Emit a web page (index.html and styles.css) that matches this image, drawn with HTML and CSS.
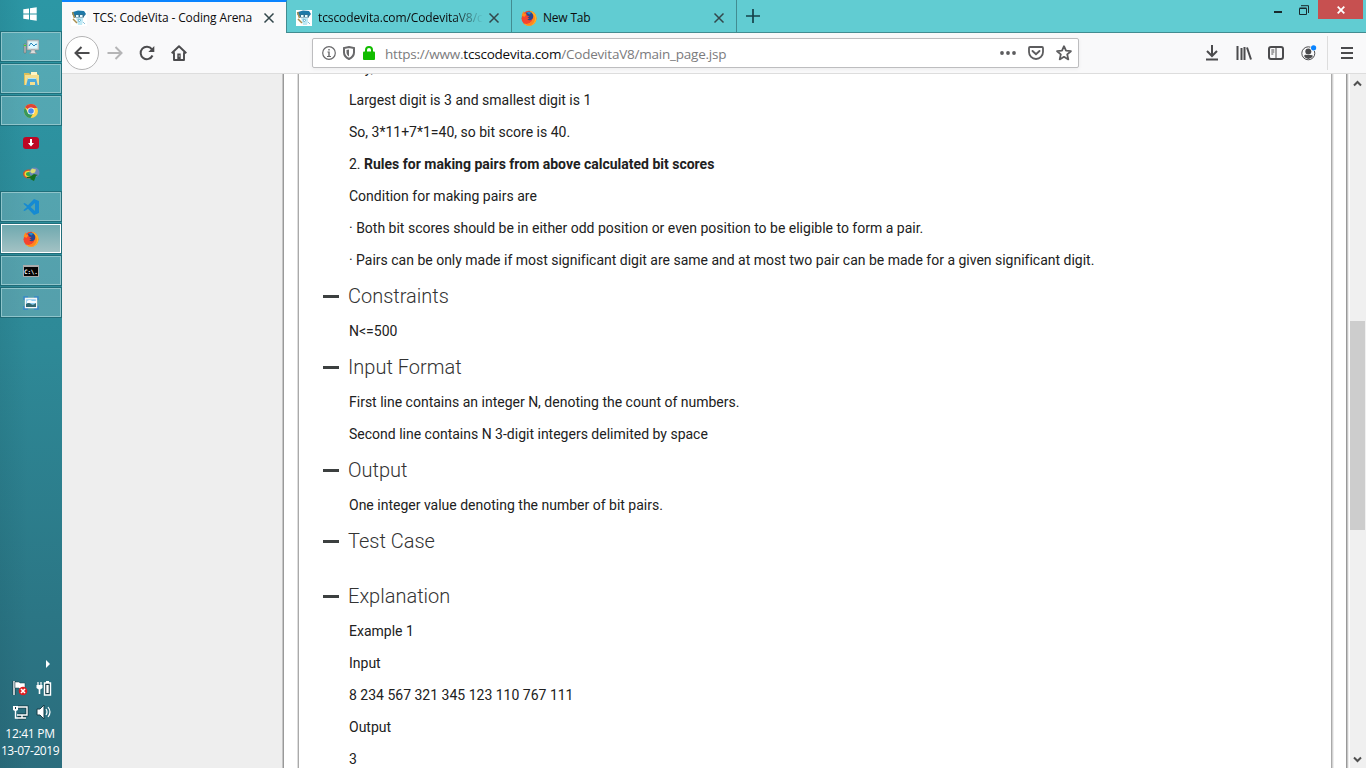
FILE: index.html
```html
<!DOCTYPE html>
<html lang="en">
<head>
<meta charset="utf-8">
<title>TCS: CodeVita - Coding Arena</title>
<link rel="stylesheet" href="styles.css">
</head>
<body>
<svg class="defs" width="0" height="0" aria-hidden="true">
  <defs>
    <symbol id="firefox" viewBox="0 0 16 16">
      <circle cx="8" cy="8.300" r="7.500" fill="#f5432f"/>
      <path d="M9 .8c4.500 1 6.600 4.300 6.500 7.600C15.300 12.800 12 15.800 8 15.800c-2 0-4-.8-5.300-2.300C8 15 12 12 12 7.500c0-2-2-4-3-6.700z" fill="#ffb321"/>
      <path d="M12 4c3 3 2.500 8-1 10.500-2 1.200-5 1-6.500 0C9 14.500 13 11 12 4z" fill="#ff8420"/>
      <path d="M.7 6C1 3.300 2.200 1.700 3 1.300l.2 2.200 2.600.2-2 3z" fill="#ff8b1c"/>
      <path d="M5 3.300C6.500 1.300 9.500 1.300 11 3c1.700 2 1.600 4.500.3 6-1.500 1.700-4 1.500-5 .5L8.500 8.500 6.500 7.500l2-1.200-2.500-.8z" fill="#2a468f"/>
      <path d="M5.500 2.800c1.200-1.500 3.500-1.500 4.800-.3L8.500 4.500z" fill="#238bd0"/>
    </symbol>
    <symbol id="coder" viewBox="0 0 16 16">
      <path fill="#fff" d="M0 0h16v16H0z"/>
      <path d="M2 2l5-1.500 6 .5 2 3-2 2.500H3L1 4z" fill="#1d78a8"/>
      <path d="M5 8h7v3l-1 4H7l-1-4z" fill="#bfe9f5"/>
      <path d="M4 4.500h9v3H4z" fill="#356f8c"/>
      <path d="M5 5h2.500v2H5zM9 5h2.500v2H9z" fill="#e9fbff"/>
      <path d="M1.500 2l2 6M2 9l4 4" stroke="#a98d4d" stroke-width="1.500"/>
      <path d="M7 9l3 1-2 2zM12 12l2 2" stroke="#6bb3cf" stroke-width=".8" fill="#fff"/>
    </symbol>
    <symbol id="close" viewBox="0 0 12 12"><path d="M1.500 1.500l9 9m0-9l-9 9" fill="none" stroke="currentColor" stroke-width="1.500"/></symbol>
  </defs>
</svg>
<div class="desktop">
  <aside class="taskbar">
    <div class="start"><svg width="14" height="14" viewBox="0 0 14 14" fill="#fff"><path d="M.3 2.200L6 1.400v5.200H.3zM7 1.200L13.700.2v6.400H7zM.3 7.500H6v5.100l-5.700-.8zM7 7.500h6.700v6.300L7 12.800z"/></svg></div>
    <div class="task open"><svg width="16" height="16" viewBox="0 0 16 16"><path d="M1 5h2v9H1z" fill="#bbb" stroke="#666" stroke-width=".5"/><path d="M1 6h2v1H1z" fill="#35dd20"/><path d="M4 1h12v10H4z" fill="#ccd0d0" stroke="#808c91" stroke-width=".6"/><path d="M5.500 2.500h9v7h-9z" fill="#dff8ff"/><path d="M6 7l2-3 3 3 2-2 1 .5" fill="none" stroke="#2384b9"/><path d="M8 11h4v2l2 1.500H6L8 13z" fill="#ddd" stroke="#888" stroke-width=".5"/></svg></div>
    <div class="task open"><svg width="17" height="16" viewBox="0 0 17 16"><path d="M1 2h5l1 1h8v11H1z" fill="#dcbf59"/><path d="M2 4h14v10H2z" fill="#f4df90"/><path d="M8 1h6v3H8z" fill="#fff5c4"/><path d="M5 7h8l2 8h-3v-4H7v4H3z" fill="#4ba9db"/><path d="M5 7.500h8" stroke="#b7e9fa"/></svg></div>
    <div class="task open"><svg width="16" height="16" viewBox="0 0 16 16"><circle cx="8" cy="8" r="7" fill="#ffd44c"/><path d="M8 8L2 4.300A7 7 0 0 1 14.200 5H8z" fill="#de4436"/><path d="M1.900 4.500A7 7 0 0 0 7.500 15l3.200-5.500L8 8 5 9.500z" fill="#37975a"/><circle cx="8" cy="8" r="3.600" fill="#fff"/><circle cx="8" cy="8" r="2.800" fill="#4989ec"/></svg></div>
    <div class="task"><svg width="16" height="12" viewBox="0 0 16 12"><rect width="16" height="12" rx="3" fill="#bd0724"/><path d="M7 2h2v4h2L8 9.500 5 6h2z" fill="#fff"/></svg></div>
    <div class="task"><svg width="17" height="15" viewBox="0 0 17 15"><ellipse cx="6" cy="7" rx="6" ry="4.500" fill="#d1532d"/><ellipse cx="6" cy="7" rx="4.500" ry="3.300" fill="#f2d738"/><ellipse cx="6" cy="7" rx="3" ry="2" fill="#2caa51"/><circle cx="11.500" cy="5.500" r="5" fill="#6c87b8"/><path d="M9 1.500l4 1-1 3-3 1-2-2z" fill="#d9dc75"/><path d="M4 10l4-1 3-2 4 1-2 1-2 5-4-2 1-1-4 0z" fill="#156f20"/></svg></div>
    <div class="task open"><svg width="16" height="16" viewBox="0 0 16 16"><path d="M11 0l5 2v12l-5 2L5 9.800 1.700 12 .3 11.200 4 8 .3 4.800 1.700 4 5 6.200zm1 4L7.500 8l4.500 4z" fill="#168ad2"/></svg></div>
    <div class="task open active"><svg width="16" height="16"><use href="#firefox"/></svg></div>
    <div class="task open"><div class="console">C:\.</div></div>
    <div class="task open"><svg width="16" height="14" viewBox="0 0 16 14"><path d="M1 4V1h4M11 1h4v3M15 10v3h-4M5 13H1v-3" fill="none" stroke="#3786c8" stroke-width="1.500"/><path d="M2.500 2.500h11v9h-11z" fill="#8fcef2" stroke="#f5f5f5" stroke-width="1.300"/><path d="M3 8q3-2 5 0t5-1v4H3z" fill="#31676f"/><path d="M4 5q3-2 5 0h4v2H4z" fill="#f4fbff"/></svg></div>
    <div class="tray">
      <div class="tray-more"><svg width="6" height="8" viewBox="0 0 6 8"><path d="M1 0l4 4-4 4z" fill="#fff"/></svg></div>
      <div class="tray-row">
        <svg width="17" height="16" viewBox="0 0 17 16"><path d="M2 1v14" stroke="#163c46" stroke-width="3"/><path d="M2 1v14" stroke="#fff" stroke-width="1.400"/><path d="M3 2h4l1 1h5v6H8L7 8H3z" fill="#fff" stroke="#163c46" stroke-width=".5"/><circle cx="11" cy="11" r="4.300" fill="#df1e20"/><path d="M9 9l4 4m0-4l-4 4" stroke="#fff" stroke-width="1.600"/></svg>
        <svg width="16" height="16" viewBox="0 0 16 16"><path d="M2 2v4M5 2v4" stroke="#fff" stroke-width="1.200"/><path d="M.5 5h6v3L4.300 9.500V14H2.700V9.500L.5 8z" fill="#fff"/><path d="M8.500 3h6v12h-6z" fill="#163c46" stroke="#fff" stroke-width="1.400"/><path d="M10 1h3v2h-3zM10.300 5h2.400v8h-2.400z" fill="#fff"/></svg>
      </div>
      <div class="tray-row">
        <svg width="17" height="16" viewBox="0 0 17 16"><path d="M6 3h9v8H6M10 11v3M6 14h8" fill="none" stroke="#163c46" stroke-width="3"/><path d="M6 3h9v8H5M10 11v3M6 14h8M3.500 6v8H6" fill="none" stroke="#fff" stroke-width="1.400"/><path d="M1 2h5v4L4 7H3L1 6z" fill="#fff"/><path d="M3 3h1v2H3z" fill="#163c46"/></svg>
        <svg width="16" height="16" viewBox="0 0 16 16"><path d="M1 5h3l4-4v14l-4-4H1z" fill="#fff" stroke="#163c46"/><path d="M10 5q2 3 0 6M12 3q4 5 0 10" fill="none" stroke="#fff" stroke-width="1.200"/></svg>
      </div>
      <div class="clock"><span class="time">12:41 PM</span><span class="date">13-07-2019</span></div>
    </div>
  </aside>
  <main class="browser">
    <header class="tabs">
      <div class="tab selected"><svg class="favicon"><use href="#coder"/></svg><span class="tab-title first">TCS: CodeVita - Coding Arena</span><svg class="x"><use href="#close"/></svg></div>
      <div class="tab"><svg class="favicon"><use href="#coder"/></svg><span class="tab-title fade">tcscodevita.com/CodevitaV8/co</span><svg class="x"><use href="#close"/></svg></div>
      <div class="tab"><svg class="favicon"><use href="#firefox"/></svg><span class="tab-title newtab">New Tab</span><svg class="x"><use href="#close"/></svg></div>
      <svg class="plus" width="14" height="14" viewBox="0 0 14 14"><path d="M7 0v14M0 7h14" stroke="#164149" stroke-width="1.700"/></svg>
      <div class="window-buttons">
        <svg width="8" height="2"><path fill="#18292c" d="M0 0h8v2H0z"/></svg>
        <svg width="10" height="10" viewBox="0 0 10 10"><path d="M.5 3.500h7v6h-7zM.5 3h7M2 .7h7.500V8" fill="none" stroke="#18292c"/></svg>
        <div class="window-close"><svg width="8" height="8" viewBox="0 0 8 8"><path d="M.7.7l6.600 6.600m0-6.600L.7 7.300" stroke="#fff" stroke-width="1.800"/></svg></div>
      </div>
    </header>
    <nav class="toolbar">
      <div class="back"><svg width="16" height="16" viewBox="0 0 16 16"><path d="M15.500 8H1.500m6-6l-6 6 6 6" fill="none" stroke="#4b4b4d" stroke-width="2"/></svg></div>
      <svg class="forward" width="16" height="16" viewBox="0 0 16 16"><path d="M.5 8h14m-6-6l6 6-6 6" fill="none" stroke="#b5b5b6" stroke-width="2"/></svg>
      <svg class="reload" width="16" height="16" viewBox="0 0 16 16"><path d="M12.800 4.200A6.200 6.200 0 1 0 13.500 10.500" fill="none" stroke="#4b4b4d" stroke-width="2"/><path d="M15.300 1v6H9.300z" fill="#4b4b4d"/></svg>
      <svg class="home" width="16" height="16" viewBox="0 0 16 16"><path d="M.7 8.300L8 1.200l7.300 7.100M3 7.300V15h10V7.300" fill="none" stroke="#4b4b4d" stroke-width="1.900" stroke-linejoin="round"/><path d="M6.300 8.500h3.400V15H6.300z" fill="#4b4b4d"/><path d="M7.700 10.500h1v1h-1z" fill="#fff"/></svg>
      <div class="address">
        <svg width="14" height="14" viewBox="0 0 14 14"><circle cx="7" cy="7" r="6.300" fill="none" stroke="#69696b" stroke-width="1.200"/><path d="M6.300 3h1.400v1.400H6.300zM5.500 5.600h2.200V10H9v1H5v-1h1.300V6.600h-.8z" fill="#69696b"/></svg>
        <svg width="12" height="14" viewBox="0 0 12 14"><path d="M6 1l5 1v4.500c0 3-2 5-5 6.500-3-1.500-5-3.500-5-6.500V2z" fill="none" stroke="#69696b" stroke-width="2"/><path d="M6 3.500v7C4.500 9.500 3.500 8 3.500 6.500V4z" fill="#69696b"/></svg>
        <svg width="12" height="14" viewBox="0 0 12 14"><path d="M3 6V4a3 3 0 0 1 6 0v2" fill="none" stroke="#12bc00" stroke-width="2"/><rect y="5.500" width="12" height="8.500" rx="1" fill="#12bc00"/></svg>
        <span class="url">https://www.<b>tcscodevita.com</b>/CodevitaV8/main_page.jsp</span>
        <svg class="dots" width="16" height="4" viewBox="0 0 16 4" fill="#5c5c5e"><circle cx="2" cy="2" r="1.900"/><circle cx="8" cy="2" r="1.900"/><circle cx="14" cy="2" r="1.900"/></svg>
        <svg class="pocket" width="16" height="14" viewBox="0 0 16 14"><path d="M2 1h12q1 0 1 1v4a7 7 0 0 1-14 0V2q0-1 1-1z" fill="none" stroke="#5c5c5e" stroke-width="1.800"/><path d="M4.500 5L8 8.300 11.500 5" fill="none" stroke="#5c5c5e" stroke-width="1.900" stroke-linecap="round"/></svg>
        <svg class="star" width="16" height="16" viewBox="0 0 16 16"><path d="M8 1.200l2 4.500 4.900.5-3.700 3.200 1.100 5L8 11.800l-4.300 2.600 1.100-5L1.100 6.200 6 5.700z" fill="none" stroke="#5c5c5e" stroke-width="1.800" stroke-linejoin="round"/></svg>
      </div>
      <div class="actions">
        <svg width="14" height="16" viewBox="0 0 14 16"><path d="M7 0v11M2 6l5 5 5-5M1 14.500h12" fill="none" stroke="#4b4b4d" stroke-width="2"/></svg>
        <svg width="16" height="14" viewBox="0 0 16 14"><path d="M1.500 0v14M5.500 2v12M8.500 1v13M11 1.500l4 12" fill="none" stroke="#4b4b4d" stroke-width="2"/></svg>
        <svg width="16" height="14" viewBox="0 0 16 14"><rect x="1" y="1" width="14" height="12" rx="2" fill="none" stroke="#4b4b4d" stroke-width="2"/><path d="M8 1v12M3.300 4h3M3.300 6h3M3.300 8h2" stroke="#4b4b4d"/></svg>
        <svg width="16" height="16" viewBox="0 0 16 16"><circle cx="7.300" cy="8.300" r="6.500" fill="none" stroke="#4b4b4d"/><circle cx="7.300" cy="6.500" r="3" fill="#4b4b4d"/><path d="M3 11q1-2 3-1h3q2-.5 3 1-2 3-4.700 3T3 11z" fill="#4b4b4d"/><circle cx="12.600" cy="2.800" r="3.300" fill="#f9f9fa"/><circle cx="12.600" cy="2.800" r="2.600" fill="#0a84ff"/></svg>
        <i class="divider"></i>
        <svg width="12" height="12" viewBox="0 0 12 12"><path d="M0 1h12M0 6h12M0 11h12" stroke="#4b4b4d" stroke-width="2"/></svg>
      </div>
    </nav>
    <section class="viewport">
      <div class="outer"><article class="problem">
        <p>Say,</p>
        <p>Largest digit is 3 and smallest digit is 1</p>
        <p>So, 3*11+7*1=40, so bit score is 40.</p>
        <p>2. <strong>Rules for making pairs from above calculated bit scores</strong></p>
        <p>Condition for making pairs are</p>
        <p>· Both bit scores should be in either odd position or even position to be eligible to form a pair.</p>
        <p class="long">· Pairs can be only made if most significant digit are same and at most two pair can be made for a given significant digit.</p>
        <h2>Constraints</h2>
        <p>N&lt;=500</p>
        <h2>Input Format</h2>
        <p>First line contains an integer N, denoting the count of numbers.</p>
        <p>Second line contains N 3-digit integers delimited by space</p>
        <h2>Output</h2>
        <p>One integer value denoting the number of bit pairs.</p>
        <h2 class="empty">Test Case</h2>
        <h2>Explanation</h2>
        <p>Example 1</p>
        <p>Input</p>
        <p>8 234 567 321 345 123 110 767 111</p>
        <p>Output</p>
        <p>3</p>
      </article></div>
      <div class="scrollbar">
        <svg width="9" height="7" viewBox="0 0 9 7"><path d="M1 5.500L4.500 2 8 5.500" fill="none" stroke="#505050" stroke-width="2"/></svg>
        <div class="thumb"></div>
        <svg class="down" width="9" height="7" viewBox="0 0 9 7"><path d="M1 1.500L4.500 5 8 1.500" fill="none" stroke="#505050" stroke-width="2"/></svg>
      </div>
    </section>
  </main>
</div>
</body>
</html>
```
FILE: styles.css
```css
* { box-sizing: border-box; }
body { margin: 0; overflow: hidden; font-family: "Open Sans", "Noto Sans", sans-serif; }
svg { display: block; flex-shrink: 0; }
.defs { position: absolute; }
.desktop { display: flex; width: 1366px; height: 768px; }

.taskbar { width: 62px; display: flex; flex-direction: column; background: linear-gradient(90deg, rgba(0,40,50,.08), transparent 45%), linear-gradient(#2c97a5, #2e8997 45%, #2b7685 80%, #2b6d7d); }
.start { height: 32px; padding: 0 2px 4px 0; display: flex; justify-content: center; align-items: center; }
.task { height: 29px; margin: 0 1px 3px 1px; display: flex; justify-content: center; align-items: center; }
.open { background: rgba(255,255,255,.19); border: 1px solid #8fc4ca; box-shadow: 0 0 0 1px rgba(20,80,90,.5); }
.active { background: linear-gradient(#6fa9af, #a3c2c4); border-color: #fff; }
.console { width: 16px; height: 12px; background: #050505; border: 1px solid #a9aaaa; border-top-width: 2px; color: #fff; font: bold 6px/9px "DejaVu Sans Mono", monospace; letter-spacing: -.2px; }
.tray { margin-top: auto; height: 112px; color: #fff; }
.tray-more { height: 16px; padding: 4px 0 0 45px; }
.tray-row { height: 24px; padding: 0 10px 0 12px; display: flex; justify-content: space-between; align-items: center; }
.tray-row:nth-child(2) { margin-top: 4px; }
.clock { display: flex; flex-direction: column; align-items: center; font-size: 12px; line-height: 17px; white-space: nowrap; padding: 1px 2px 0 0; }
.time { letter-spacing: -.3px; }
.date { letter-spacing: -.45px; }

.browser { width: 1304px; display: flex; flex-direction: column; }
.tabs { height: 33px; display: flex; background: #61ccd2; box-shadow: inset 0 -1px #428c91; }
.tab { width: 225px; height: 33px; padding: 2px 11px 0 9px; display: flex; align-items: center; border-right: 1px solid #428c91; }
.selected { background: #f9f9fa; border-top: 2px solid #0a84ff; padding-top: 0; }
.favicon { width: 16px; height: 16px; margin-right: 6px; }
.x { width: 12px; height: 12px; margin-left: auto; color: #33474b; }
.tab-title { width: 165px; overflow: hidden; white-space: nowrap; font-size: 12px; color: #0c0c0d; line-height: 20px; }
.fade { letter-spacing: -.1px; -webkit-mask-image: linear-gradient(90deg, #000 82%, transparent 100%); mask-image: linear-gradient(90deg, #000 82%, transparent 100%); }
.first { letter-spacing: -.12px; }
.newtab { letter-spacing: -.2px; }
.plus { margin: 9px 0 0 9px; }
.window-buttons { display: flex; margin-left: auto; height: 19px; align-items: center; }
.window-buttons > svg:first-child { margin: 5px 17px 0 0; }
.window-buttons > svg:nth-child(2) { margin-right: 9px; }
.window-close { width: 45px; height: 19px; margin-right: 3px; background: #c75050; display: flex; align-items: center; justify-content: center; }

.toolbar { height: 41px; display: flex; align-items: center; background: #f9f9fa; border-bottom: 1px solid #ddd; padding-left: 3px; }
.back { width: 34px; height: 34px; border: 1px solid #b3b3b4; border-radius: 50%; background: #fff; display: flex; align-items: center; justify-content: center; }
.forward { margin-left: 8px; }
.reload { margin-left: 16px; }
.home { margin-left: 16px; }
.address { width: 767px; height: 30px; margin-left: 125px; padding: 0 6px 0 9px; display: flex; align-items: center; background: #fff; border: 1px solid #bdbdbf; border-radius: 2px; box-shadow: 0 1px 4px rgba(0,0,0,.06); }
.address svg { margin-right: 7px; }
.address svg:nth-child(2) { margin-right: 8px; }
.url { margin: 2px 0 0 3px; font-size: 13.5px; letter-spacing: -.22px; color: #7b7b7d; white-space: nowrap; }
.url b { font-weight: 400; color: #0c0c0d; }
.address .dots { margin: 0 12px 0 auto; }
.address .pocket { margin-right: 12px; }
.address .star { margin-right: 0; }
.actions { display: flex; align-items: center; margin-left: auto; padding-right: 13px; }
.actions svg:nth-child(1) { margin-right: 17px; }
.actions svg:nth-child(2) { margin-right: 16px; }
.actions svg:nth-child(3) { margin-right: 17px; }
.divider { width: 1px; height: 34px; background: #ddd; margin: 0 13px 0 10px; }

.viewport { height: 694px; display: flex; overflow: hidden; background: #eee; }
.outer { display: flow-root; width: 1063px; margin-left: 221px; padding: 0 12px 0 14px; background: #fff; border-left: 1px solid #999; box-shadow: -1px 0 #c5c5c5, 1px 0 #999, 2px 0 #c5c5c5, 3px 0 #eee; }
.problem { width: 1034px; height: 716px; margin-top: -22px; padding-left: 50px; overflow: hidden; background: #fff; border-left: 1px solid #aaa; border-right: 1px solid #aaa; box-shadow: -1px 0 #ddd, 1px 0 #d2d2d2, 2px 0 #eee; }
.problem p, .problem h2 { margin: 0; font-family: Roboto, sans-serif; white-space: nowrap; color: #212121; }
.problem p { height: 32px; font-size: 14px; line-height: 32px; }
.problem .long { letter-spacing: -.007px; }
.problem h2 { height: 39px; margin-left: -26px; padding-top: 2px; display: flex; align-items: center; font-size: 20px; font-weight: 300; line-height: 37px; color: #333; }
.problem h2::before { content: ""; width: 16px; height: 3px; margin-right: 9px; background: #3c4040; }
.problem .empty { margin-bottom: 16px; }
.scrollbar { width: 17px; margin-left: auto; padding: 6px 1px 5px 0; background: #f0f0f0; display: flex; flex-direction: column; align-items: center; box-shadow: inset 1px 0 #fff; }
.thumb { width: 15px; height: 209px; margin: 234px 0 0 1px; background: #cdcdcd; }
.down { margin-top: auto; }
```
